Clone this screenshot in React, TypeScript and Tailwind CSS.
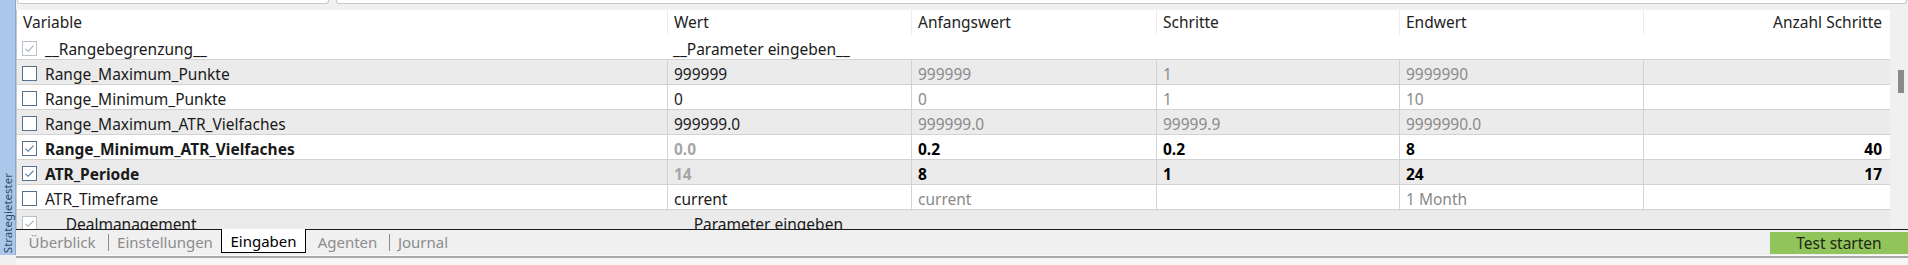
import React from 'react'

type Row = {
  name: string
  check: 'on' | 'off' | 'dis'
  bold?: boolean
  group?: string
  cells?: string[]
}

const ROWS: Row[] = [
  { name: '__Rangebegrenzung__', check: 'dis', group: '__Parameter eingeben__' },
  { name: 'Range_Maximum_Punkte', check: 'off', cells: ['999999', '999999', '1', '9999990', ''] },
  { name: 'Range_Minimum_Punkte', check: 'off', cells: ['0', '0', '1', '10', ''] },
  { name: 'Range_Maximum_ATR_Vielfaches', check: 'off', cells: ['999999.0', '999999.0', '99999.9', '9999990.0', ''] },
  { name: 'Range_Minimum_ATR_Vielfaches', check: 'on', bold: true, cells: ['0.0', '0.2', '0.2', '8', '40'] },
  { name: 'ATR_Periode', check: 'on', bold: true, cells: ['14', '8', '1', '24', '17'] },
  { name: 'ATR_Timeframe', check: 'off', cells: ['current', 'current', '', '1 Month', ''] },
  { name: '___Dealmanagement___', check: 'dis', group: '___Parameter eingeben___' },
]

const HEADERS = ['Wert', 'Anfangswert', 'Schritte', 'Endwert']

const TABS = [
  { label: 'Überblick', w: 'w-[92px]', sep: true },
  { label: 'Einstellungen', w: 'w-[112px]' },
  { label: 'Eingaben', w: 'w-[85px]', active: true },
  { label: 'Agenten', w: 'w-[83px]', sep: true },
  { label: 'Journal', w: 'w-[66px]' },
]

function Check({ state }: { state: Row['check'] }) {
  const border = state === 'dis' ? 'border-[#b6c2ce]' : 'border-[#54728f]'
  return (
    <span className={`w-[15px] h-[15px] border bg-white flex items-center justify-center shrink-0 ${border}`}>
      {state !== 'off' && (
        <svg width="11" height="11" viewBox="0 0 11 11" fill="none">
          <path
            d="M1.5 5.8 L4.2 8.3 L9.5 2.6"
            stroke={state === 'dis' ? '#a9a9a9' : '#4f7396'}
            strokeWidth="1.1"
          />
        </svg>
      )}
    </span>
  )
}

function cellColor(row: Row, i: number) {
  if (row.bold) return i === 0 ? 'text-[#a6a6a6]' : 'text-black'
  return i === 0 ? 'text-[#1a1a1a]' : 'text-[#8a8a8a]'
}

export default function App() {
  return (
    <div className="w-[1908px] h-[265px] bg-[#f0f0f0] flex overflow-hidden text-[15.5px] font-['Noto_Sans','Open_Sans',sans-serif]">
      {/* side label */}
      <div className="w-[16px] h-[255px] bg-[#abc8ea] border-r border-[#8fa9c6] flex items-end justify-center pb-[2px]">
        <span className="[writing-mode:vertical-rl] rotate-180 text-[11.5px] text-[#2d4b6b] leading-none whitespace-nowrap">
          Strategietester
        </span>
      </div>

      <div className="flex-1 flex flex-col min-w-0">
        {/* input stubs */}
        <div className="h-[10px] flex gap-[7px] pl-[1px]">
          <div className="w-[312px] h-[4px] bg-white border-x border-b border-[#c9c9c9] rounded-b-[3px]" />
          <div className="flex-1 h-[4px] bg-white border-x border-b border-[#c9c9c9] rounded-b-[3px] mr-[1px]" />
        </div>

        {/* table + scrollbar */}
        <div className="h-[219px] flex">
          <div className="w-[1874px] border-l border-[#c8c8c8] bg-white overflow-hidden">
            <div className="grid grid-cols-[650px_244px_245px_243px_244px_246px] h-[25px] text-[#222]">
              <div className="pl-[6px] pt-[1px] flex items-center">Variable</div>
              {HEADERS.map(h => (
                <div key={h} className="pl-[6px] pt-[1px] flex items-center border-l border-[#ececec]">{h}</div>
              ))}
              <div className="pr-[7px] pt-[1px] flex items-center justify-end border-l border-[#ececec]">Anzahl Schritte</div>
            </div>

            {ROWS.map((row, r) => (
              <div
                key={row.name}
                className={`grid grid-cols-[650px_244px_245px_243px_244px_246px] h-[25px] border-b border-[#d2d2d2] ${
                  r % 2 === 1 ? 'bg-[#ebebeb]' : 'bg-white'
                } ${row.bold ? 'font-bold' : ''}`}
              >
                <div className="pl-[5px] flex items-center gap-[8px] whitespace-nowrap text-[#1a1a1a]">
                  <Check state={row.check} />
                  <span className="pt-[3px]">{row.name}</span>
                </div>
                {row.group ? (
                  <div className="col-span-5 pl-[6px] pt-[3px] flex items-center text-[#1a1a1a] whitespace-nowrap">{row.group}</div>
                ) : (
                  row.cells!.map((c, i) => (
                    <div
                      key={i}
                      className={`border-l border-[#d2d2d2] pt-[3px] flex items-center whitespace-nowrap ${
                        i === 4 ? 'justify-end pr-[7px]' : 'pl-[6px]'
                      } ${cellColor(row, i)}`}
                    >
                      {c}
                    </div>
                  ))
                )}
              </div>
            ))}
          </div>
          <div className="w-[18px] bg-[#f0f0f0] pt-[60px] pl-[8px]">
            <div className="w-[6px] h-[23px] bg-[#8a8a8a]" />
          </div>
        </div>

        {/* tabs */}
        <div className="h-[26px] border-t border-[#1a1a1a] flex items-start text-[15px]">
          {TABS.map(t => (
            <React.Fragment key={t.label}>
              <div
                className={`${t.w} h-[24px] flex items-center justify-center pt-[1px] ${
                  t.active ? 'bg-white border-x border-b border-black text-black -mt-px' : 'text-[#8c8c8c]'
                }`}
              >
                {t.label}
              </div>
              {t.sep && <div className="w-px h-[17px] bg-[#8c8c8c] mt-[4px]" />}
            </React.Fragment>
          ))}
          <div className="flex-1" />
          <div className="w-[138px] h-[22px] mt-[2px] pt-[1px] bg-[#92c45c] flex items-center justify-center text-[#1e2a14] text-[15.5px]">
            Test starten
          </div>
        </div>
        <div className="h-px bg-[#fafafa]" />
        <div className="h-[2px] bg-[#a9a9a9]" />
        <div className="flex-1 bg-[#f7f7f7]" />
      </div>
    </div>
  )
}
